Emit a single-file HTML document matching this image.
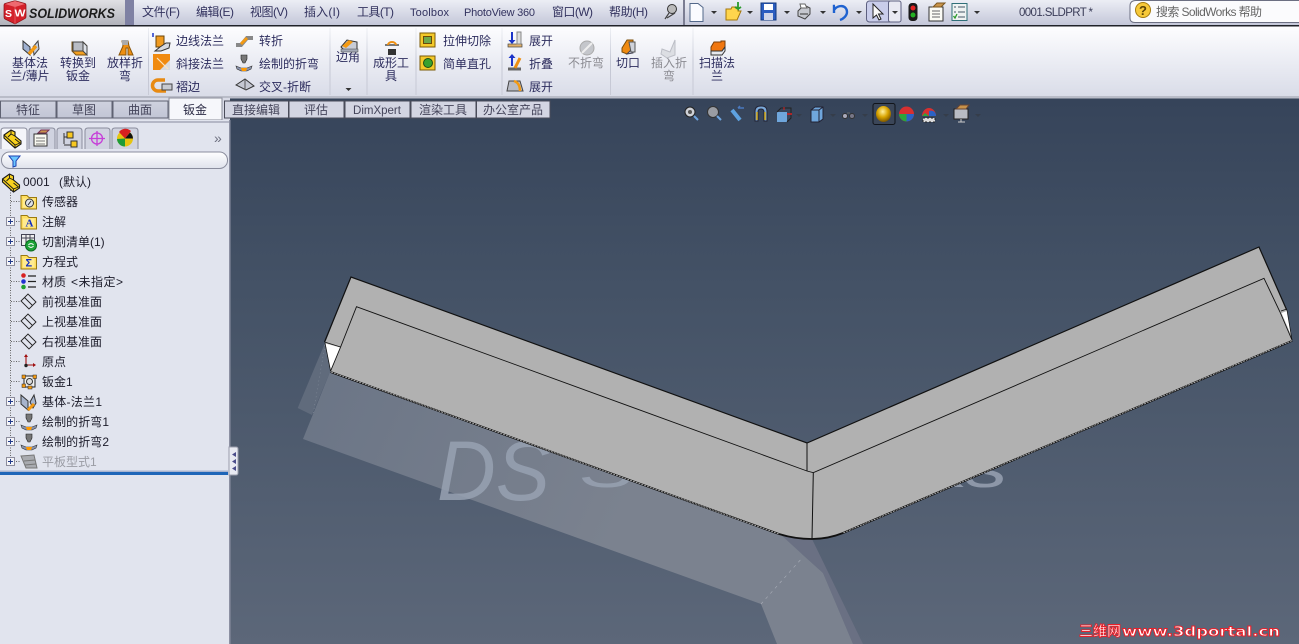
<!DOCTYPE html>
<html lang="zh"><head><meta charset="utf-8"><title>SolidWorks</title>
<style>
html,body{margin:0;padding:0;width:1299px;height:644px;overflow:hidden;background:#4a5669}
svg{display:block;position:absolute;left:0;top:0}
text{font-family:"Liberation Sans","Noto Sans CJK SC",sans-serif;font-size:12px}
.m{fill:#33335f}.r{fill:#2d2d5e}.g{fill:#8b8b92}.t{fill:#1c1c2a}.c{text-anchor:middle}
.tb{fill:#44445a;text-anchor:middle}
</style></head><body>
<svg width="1299" height="644" viewBox="0 0 1299 644" xmlns="http://www.w3.org/2000/svg">
<defs>
<linearGradient id="vp" x1="0" y1="0" x2="0" y2="1"><stop offset="0" stop-color="#36445a"/><stop offset=".35" stop-color="#445266"/><stop offset="1" stop-color="#5c6779"/></linearGradient>
<linearGradient id="bar" x1="0" y1="0" x2="0" y2="1"><stop offset="0" stop-color="#eceef5"/><stop offset="1" stop-color="#c4c7d9"/></linearGradient>
<linearGradient id="logo" x1="0" y1="0" x2="0" y2="1"><stop offset="0" stop-color="#e0e0e4"/><stop offset="1" stop-color="#b2b3bb"/></linearGradient>
<linearGradient id="rib" x1="0" y1="0" x2="0" y2="1"><stop offset="0" stop-color="#fdfdff"/><stop offset="1" stop-color="#d9dce8"/></linearGradient>
<linearGradient id="tab" x1="0" y1="0" x2="0" y2="1"><stop offset="0" stop-color="#cfd2df"/><stop offset="1" stop-color="#c2c5d5"/></linearGradient>
<linearGradient id="sep" x1="0" y1="0" x2="0" y2="1"><stop offset="0" stop-color="#eef0f5"/><stop offset=".5" stop-color="#c4c7d4"/><stop offset="1" stop-color="#c8cad6"/></linearGradient>
<linearGradient id="flt" x1="0" y1="0" x2="0" y2="1"><stop offset="0" stop-color="#fff"/><stop offset="1" stop-color="#dfe2ec"/></linearGradient>
<linearGradient id="sh" gradientUnits="userSpaceOnUse" x1="310" y1="380" x2="620" y2="520"><stop offset="0" stop-color="#6b7586"/><stop offset="1" stop-color="#7b828f"/></linearGradient>
<radialGradient id="gold" cx=".45" cy=".35" r=".7"><stop offset="0" stop-color="#fff1a0"/><stop offset=".5" stop-color="#d9a400"/><stop offset="1" stop-color="#6e4a00"/></radialGradient>
<g id="fd"><path d="M0,2h6l2,2h7.500v11.500h-15.500z" fill="#ffdf60" stroke="#9b7a10"/><rect x="2" y="5" width="11.500" height="9" fill="#ffeb90"/></g>
<g id="pl" fill="none" stroke="#222" stroke-width=".9"><path d="M0,7.500L7,0.500L15,8.500L8,15.500Z"/><path d="M3.500,4L11.500,12"/></g>
<g id="pb" ><rect x="0.500" y="0.500" width="8" height="8" fill="#f3f4f8" stroke="#8c8c9c"/><path d="M2,4.500h5M4.500,2v5" stroke="#223a8a"/></g>
<g id="part"><path d="M0,5L7,0L11,2V6L17,11V14L11,18L0,8Z" fill="#f8d21f" stroke="#1a1a1a" stroke-width="1.100"/><path d="M0,5L11,15V18M7,0L7,4L11,6M7,4L4,7M11,9L16,13L11,15" fill="none" stroke="#1a1a1a" stroke-width=".9"/></g>
<g id="bnd"><path d="M5,0h6v4l-2,4h-2l-2,-4z" fill="#777" stroke="#222" stroke-width=".6"/><path d="M0,11l5,2h6l5,-2l-1,3l-4,2h-6l-4,-2z" fill="#8a93ad" stroke="#333" stroke-width=".6"/><path d="M5,13h6l-1,3h-4z" fill="#f90"/></g>
<path id="dn" d="M0,0h6l-3,3z" fill="#333"/>
</defs>

<!-- viewport -->
<rect x="230" y="98" width="1069" height="546" fill="url(#vp)"/>

<!-- shadow -->
<path d="M325,343L297.700,408L312,415L330,372Z" fill="#606b7c"/>
<path d="M812,539L863,644H853L823,573L803,555L780,536Z" fill="#6a7083"/>
<path d="M330,372L303,439L761,604L777,644H853L823,573L803,555L780,534Z" fill="url(#sh)"/>
<path d="M761,604L803,557" stroke="#a9aeb8" stroke-width=".6" stroke-dasharray="3 4" fill="none"/>
<path d="M325,345L313,415" stroke="#8a93a1" stroke-width=".5" stroke-dasharray="1 3" fill="none"/>

<!-- watermark -->
<text x="437" y="500" style="font-size:84px;font-style:italic;font-family:'Liberation Sans',sans-serif" fill="#98a2b2" opacity=".85" textLength="113" lengthAdjust="spacingAndGlyphs">DS</text>
<text x="578" y="487" style="font-size:56px;font-family:'Liberation Sans',sans-serif" fill="#98a2b2" opacity=".85" textLength="428" lengthAdjust="spacingAndGlyphs">SolidWorks</text>

<!-- part -->
<path d="M351,277L807,443L1259,247L1287,310L1292,340.700L843,533Q828,539 812,539Q795,539 779,534L330.600,372L325,343Z" fill="#b1b1b1"/>
<path d="M325.500,343.500L340.500,347.500L330.600,370Z" fill="#fff"/>
<path d="M1281.500,313L1286.700,311L1291,335Z" fill="#fff"/>
<g fill="none" stroke="#111">
<path d="M324.500,342L351,277L807,443L1259,247L1286.700,310" stroke-width="1.200"/>
<path d="M324.500,342L340.500,347" stroke-width=".8"/>
<path d="M1281,311L1287,309" stroke-width=".8"/>
<path d="M330.600,371L340.600,347L356.500,306.700L807,471L813.300,472.700L1264,278.300L1280,312L1292,340" stroke-width=".9"/>
<path d="M325,343L330.600,371" stroke-width=".7"/>
<path d="M1287,310L1292,340" stroke-width=".7"/>
<path d="M807,443V471M813.300,472.700L812,539" stroke-width="1"/>
<path d="M330.600,372L779,534Q795,539 812,539Q828,539 843,533L1292.300,340.700" stroke-width="1.800"/>
</g>
<path d="M331,372L779,534M1292,340.700L843,533" fill="none" stroke="#e4e4e4" stroke-width=".6" stroke-dasharray="2 1"/>

<!-- top bar -->
<rect x="0" y="0" width="1299" height="25" fill="url(#bar)"/>
<rect x="0" y="0" width="125" height="25" fill="url(#logo)"/>
<rect x="125" y="0" width="9" height="25" fill="#7f81a3"/>
<rect x="0" y="25" width="1299" height="1.500" fill="#1f2128"/>
<rect x="683" y="0" width="2" height="25" fill="#7b7d92"/>
<!-- logo -->
<path d="M4,5Q4,4 5,3.500L14,1Q15,.8 16,1L25,3.500Q26,4 26,5V17Q26,18 25,18.500L15,24L5,19Q4,18.500 4,17Z" fill="#d3212a" stroke="#8c1116" stroke-width=".7"/>
<path d="M5,4L15,1L25,4L15,7Z" fill="#ee6a70"/>
<path d="M15,7V24" stroke="#ef7a80" stroke-width=".6"/>
<text x="5" y="17" style="font-size:10.500px;font-weight:bold" fill="#fff">S</text>
<text x="14.500" y="16.500" style="font-size:10.500px;font-weight:bold" fill="#fff" textLength="11" lengthAdjust="spacingAndGlyphs">W</text>
<text x="29" y="18" style="font-size:13.500px;font-style:italic;font-weight:bold" fill="#1c1c1c" textLength="86" lengthAdjust="spacingAndGlyphs">SOLIDWORKS</text>
<g class="m">
<text x="142" y="16" class="m" textLength="38">文件(F)</text><text x="196" y="16" class="m" textLength="38">编辑(E)</text><text x="250" y="16" class="m" textLength="38">视图(V)</text><text x="304" y="16" class="m" textLength="36">插入(I)</text><text x="357" y="16" class="m" textLength="37">工具(T)</text>
<text x="410" y="16" class="m" style="font-size:11px" textLength="39">Toolbox</text><text x="464" y="16" class="m" style="font-size:11px" textLength="71">PhotoView 360</text>
<text x="552" y="16" class="m" textLength="41">窗口(W)</text><text x="609" y="16" class="m" textLength="39">帮助(H)</text></g>
<!-- pin -->
<circle cx="672" cy="9" r="4.500" fill="#bbb" stroke="#333"/><path d="M669,13L665,19M675,13L667,18" stroke="#444" stroke-width="1.200"/>
<!-- file -->
<path d="M690,3.500h8l5,4v14h-13z" fill="#fafbff" stroke="#53688a"/>
<use href="#dn" x="711" y="11"/>
<path d="M726,9h5l1,-2h6v4h3l-4,9h-11z" fill="#ffd54d" stroke="#a6780c"/><path d="M738,2v7l-3,-2M738,9l3,-2" stroke="#2a9a2a" stroke-width="1.800" fill="none"/>
<use href="#dn" x="747" y="11"/>
<rect x="761" y="3" width="15" height="17" fill="#2c5ec0" stroke="#133a80"/><rect x="764" y="4" width="9" height="6" fill="#fff"/><rect x="764" y="13" width="9" height="7" fill="#d0d6e8"/>
<use href="#dn" x="784" y="11"/>
<path d="M798,11l6,-6l6,3v6l-5,5l-7,-3z" fill="#c5c7ce" stroke="#444"/><path d="M800,4h5l2,4h-6z" fill="#fff" stroke="#666"/><path d="M800,14h8" stroke="#333"/>
<use href="#dn" x="820" y="11"/>
<path d="M835,6h-1v7M834,10c4,-6 13,-5 13,2c0,4 -4,7 -7,8" stroke="#1f62d0" stroke-width="2.400" fill="none"/>
<use href="#dn" x="856" y="11"/>
<rect x="866.500" y="1" width="34.500" height="21" rx="3" fill="#c9cdea" stroke="#5d6080"/><rect x="888.500" y="1" width="12.500" height="21" rx="2" fill="#e8e9f2" stroke="#5d6080"/>
<path d="M873,4V18L876.500,15L879,20L881,19L878.500,14H883Z" fill="#fafafa" stroke="#222"/>
<use href="#dn" x="892" y="11"/>
<rect x="908.500" y="3" width="9" height="18" rx="3.500" fill="#1a1a1a"/><circle cx="913" cy="8" r="2.500" fill="#e42323"/><circle cx="913" cy="15" r="2.500" fill="#23b023"/>
<path d="M929,7h14v14h-14z" fill="#fbfbf5" stroke="#333"/><path d="M932,11h8M932,14h8M932,17h8" stroke="#666"/><path d="M933,7l4,-4h8l-4,4z" fill="#c9944a" stroke="#7a5520"/>
<rect x="952" y="3.500" width="15" height="17" fill="#eef2f2" stroke="#2f6f78"/><path d="M958,7h7M958,12h7M958,17h7" stroke="#456"/><path d="M954,7h2M954,12h2" stroke="#456"/><path d="M953.500,16l1.500,2l2,-4" stroke="#2a9a2a" fill="none" stroke-width="1.300"/>
<use href="#dn" x="974" y="11"/>
<text x="1019" y="16" class="m" style="fill:#3a3c58;font-size:11.500px" textLength="74">0001.SLDPRT *</text>
<!-- search -->
<path d="M1299,.5H1136Q1130,.5 1130,6V18Q1130,22.500 1135,22.500H1299" fill="#fbfbfd" stroke="#6c6f82"/>
<circle cx="1143" cy="10" r="7.500" fill="#f7c93a" stroke="#a67c10"/><text x="1139" y="15" style="font-size:13px;font-weight:bold" fill="#5c4406">?</text>
<text x="1156" y="16" fill="#666" textLength="106">搜索 SolidWorks 帮助</text>

<!-- ribbon -->
<rect x="0" y="26.500" width="1299" height="70" fill="url(#rib)"/>
<rect x="0" y="96" width="1299" height="2.500" fill="#b9bcc8"/>
<g fill="url(#sep)">
<rect x="148" y="28" width="1" height="67"/><rect x="329.500" y="28" width="1" height="67"/><rect x="366.500" y="28" width="1" height="67"/><rect x="415.500" y="28" width="1" height="67"/><rect x="501.500" y="28" width="1" height="67"/><rect x="610" y="28" width="1" height="67"/><rect x="692.500" y="28" width="1" height="67"/>
</g>
<!-- ribbon labels -->
<g class="r">
<text x="30" y="67" class="r c">基体法</text><text x="30" y="80" class="r c">兰/薄片</text>
<text x="78" y="67" class="r c">转换到</text><text x="78" y="80" class="r c">钣金</text>
<text x="125" y="67" class="r c">放样折</text><text x="125" y="80" class="r c">弯</text>
<text x="176" y="45" class="r">边线法兰</text><text x="176" y="68" class="r">斜接法兰</text><text x="176" y="91" class="r">褶边</text>
<text x="259" y="45" class="r">转折</text><text x="259" y="68" class="r">绘制的折弯</text><text x="259" y="91" class="r">交叉-折断</text>
<text x="348" y="61" class="r c">边角</text>
<text x="391" y="67" class="r c">成形工</text><text x="391" y="80" class="r c">具</text>
<text x="443" y="45" class="r">拉伸切除</text><text x="443" y="68" class="r">简单直孔</text>
<text x="529" y="45" class="r">展开</text><text x="529" y="68" class="r">折叠</text><text x="529" y="91" class="r">展开</text>
<text x="586" y="67" class="g c">不折弯</text>
<text x="628" y="67" class="r c">切口</text>
<text x="669" y="67" class="g c">插入折</text><text x="669" y="80" class="g c">弯</text>
<text x="717" y="67" class="r c">扫描法</text><text x="717" y="80" class="r c">兰</text>
</g>
<!-- ribbon icons -->
<path d="M23,41L30,47V55L23,49Z" fill="#9fb0d0" stroke="#333"/><path d="M33,47L38,41L39,49L34,55Z" fill="#c3cde0" stroke="#444"/><path d="M29,54L36,46" stroke="#f49a12" stroke-width="3.500"/>
<path d="M72,42h11l4,4v9H76l-4,-4z" fill="#f4a020" stroke="#7c5210"/><rect x="73" y="42" width="10" height="9" fill="#b9bcc4" stroke="#444"/><path d="M83,42l4,4v9l-4,-4z" fill="#dfe2e8" stroke="#444"/>
<path d="M122,41h6l1,5l4,9h-5v-7h-2v7h-7l4,-9z" fill="#ee8f12" stroke="#8a560a"/><rect x="122" y="40" width="6" height="5" fill="#aaa"/>
<!-- edge flange -->
<path d="M156,36h8v11h-8z" fill="#f09a20" stroke="#6a4408"/><path d="M160,47l6,-4h4l-1,5l-8,3h-6z" fill="#d6d9e0" stroke="#333"/><path d="M153,33v4" stroke="#1c34c8" stroke-width="1.500"/>
<rect x="153" y="54" width="17" height="16" fill="#f08a10"/><path d="M170,60V70H160Z" fill="#d8dae0"/><path d="M157,58L168,69" stroke="#fbe3c0" stroke-width="1.200"/>
<path d="M165,80h-7a5,5 0 0 0 0,11h8" fill="none" stroke="#e88a12" stroke-width="3.500"/><rect x="162" y="84" width="10" height="6" fill="#c7cad2" stroke="#444"/>
<path d="M236,45h5l6,-7h6" stroke="#888" stroke-width="4" fill="none"/><path d="M241,44l6,-6" stroke="#f49a12" stroke-width="3"/>
<use href="#bnd" x="236" y="55"/>
<path d="M236,85l9,-6l9,7l-8,4z" fill="#c5c8d2" stroke="#333"/><path d="M245,79v11" stroke="#555"/>
<!-- corner -->
<path d="M341,47l6,-7l10,2v8h-13z" fill="#c8ccd6" stroke="#333"/><path d="M342,46l7,-6l4,2l-7,6z" fill="#f49a12"/><rect x="341" y="49" width="17" height="3" fill="#a3a9b6" stroke="#444" stroke-width=".5"/>
<use href="#dn" x="345.500" y="88"/>
<!-- forming -->
<path d="M385,45h14" stroke="#777" stroke-width="2"/><path d="M388,45a4,3 0 0 1 8,0" fill="none" stroke="#ee8f12" stroke-width="2"/><rect x="388" y="49" width="8" height="6" fill="#333"/>
<rect x="420" y="33" width="15" height="14" fill="#f4c92a" stroke="#7a5a08"/><rect x="423.500" y="36.500" width="8" height="7" fill="#6da84a" stroke="#6b4a08"/>
<rect x="420" y="56" width="15" height="14" fill="#f4c92a" stroke="#7a5a08"/><circle cx="428" cy="63" r="4.500" fill="#39a12f" stroke="#1e4e14"/>
<!-- unfold -->
<path d="M512,32v11" stroke="#1c34c8" stroke-width="2"/><path d="M508.500,40l3.500,4l3.500,-4z" fill="#1c34c8"/><rect x="508" y="44" width="14" height="3" fill="#e2b068" stroke="#444" stroke-width=".7"/><rect x="517" y="32" width="4" height="12" fill="#ddd" stroke="#888"/>
<path d="M512,55v11" stroke="#1c34c8" stroke-width="2"/><path d="M508.500,58l3.500,-4l3.500,4z" fill="#1c34c8"/><path d="M508,69h13" stroke="#666" stroke-width="3"/><path d="M515,68l5,-10" stroke="#ee8f12" stroke-width="3"/>
<path d="M507,91l2,-10h11l3,10z" fill="#b9bcc5" stroke="#444"/><path d="M514,81q6,2 6,10" stroke="#f49a12" stroke-width="2.500" fill="none"/>
<circle cx="587" cy="48" r="7" fill="#c4c6cb" stroke="#aaa"/><path d="M582,53l10,-10" stroke="#eee" stroke-width="2"/>
<path d="M622,48l5,-8h6v11l-6,3l-5,-2z" fill="#f08a10" stroke="#7a4c08"/><path d="M627,54l6,-6v5z" fill="#ccd" stroke="#445"/><path d="M629,42h6v10h-4z" fill="#cfd2da" stroke="#555"/>
<path d="M662,49l8,3l5,-12v15l-8,3l-6,-4z" fill="#dcdee3" stroke="#bcbec6"/>
<path d="M711,47l3,-5h7v-1h4v6l-3,4h-11z" fill="#f0760f" stroke="#7a3e08"/><path d="M711,51h11l3,-4v4l-3,4h-11z" fill="#e6e8ee" stroke="#333"/>

<!-- tabs -->
<rect x="0" y="98" width="230" height="24" fill="#d8dae6"/>
<g stroke="#5f6272" fill="url(#tab)">
<rect x=".5" y="101" width="55.500" height="17"/><rect x="57" y="101" width="55" height="17"/><rect x="113" y="101" width="55" height="17"/>
</g>
<g stroke="#4a4c5a" fill="#d3d5e2">
<rect x="224.500" y="101" width="64" height="17"/><rect x="289" y="101" width="55" height="17"/><rect x="345" y="101" width="65" height="17"/><rect x="411" y="101" width="65" height="17"/><rect x="476.500" y="101" width="73.500" height="17"/>
</g>
<path d="M169,120V98H222V120Z" fill="#f6f7fb" stroke="#8a8c9a"/>
<g>
<text x="28" y="114" class="tb">特征</text><text x="84" y="114" class="tb">草图</text><text x="140" y="114" class="tb">曲面</text>
<text x="195" y="114" class="c" fill="#2a2a44">钣金</text>
<text x="256" y="114" class="tb">直接编辑</text><text x="316" y="114" class="tb">评估</text><text x="377" y="114" class="tb" style="font-size:11.500px">DimXpert</text><text x="443" y="114" class="tb">渲染工具</text><text x="513" y="114" class="tb">办公室产品</text>
</g>

<!-- left panel -->
<rect x="0" y="120" width="229" height="524" fill="#e1e4ee"/>
<rect x="229" y="120" width="1.500" height="524" fill="#8c90a2"/>
<rect x="0" y="121" width="229" height="2" fill="#b4b7c6"/>
<rect x="0" y="472" width="228" height="3" fill="#1f66b8"/>
<rect x="0" y="470.500" width="228" height="1.500" fill="#a8b4d0"/>
<!-- panel tabs -->
<g fill="#d0d3e0" stroke="#8a8d9d">
<path d="M29,149V131q0,-3 3,-3h20q3,0 3,3V149"/><path d="M57,149V131q0,-3 3,-3h19q3,0 3,3V149"/><path d="M85,149V131q0,-3 3,-3h19q3,0 3,3V149"/><path d="M112,149V131q0,-3 3,-3h20q3,0 3,3V149"/>
</g>
<path d="M1,149V131q0,-3 3,-3h20q3,0 3,3V150" fill="#f4f5fa" stroke="#8a8d9d"/>
<use href="#part" x="4" y="130"/>
<rect x="34" y="134" width="13" height="12" fill="#f8f8f0" stroke="#333"/><path d="M36,138h9M36,141h9M36,144h9" stroke="#777"/><path d="M38,133l3,-3h8l-3,3z" fill="#c8924a" stroke="#735"/>
<path d="M64,133v11M64,137h4M64,145h7" stroke="#333" fill="none"/><rect x="67" y="132" width="6" height="6" fill="#f8c820" stroke="#333"/><rect x="71" y="141" width="6" height="6" fill="#f8c820" stroke="#333"/>
<g stroke="#c63fd8" fill="none" stroke-width="1.300"><circle cx="97" cy="138.500" r="5.500"/><path d="M89,138.500h16M97,131v15"/></g>
<circle cx="125" cy="138.500" r="8" fill="#e6c410"/><path d="M125,138.500L119,132A8,8 0 0 1 131,131z" fill="#d62020"/><path d="M125,138.500L117,139A8,8 0 0 0 125,146.500z" fill="#1e9b36"/><path d="M125,138.500h8a8,8 0 0 0 -3,-6z" fill="#111"/>
<text x="214" y="143" style="font-size:14px" fill="#6e7080">»</text>
<!-- filter -->
<rect x="1.500" y="152" width="226" height="16.500" rx="8" fill="url(#flt)" stroke="#8a8d9d"/>
<path d="M9,156h11l-4,5v5l-3,1v-6z" fill="#6bc6ff" stroke="#1c40b0"/>
<!-- tree -->
<path d="M10.500,190V462M11,201.500h9M11,221.500h9M11,241.500h9M11,261.500h9M11,281.500h9M11,301.500h9M11,321.500h9M11,341.500h9M11,361.500h9M11,381.500h9M11,401.500h9M11,421.500h9M11,441.500h9M11,461.500h9" stroke="#666" stroke-dasharray="1 1.500" fill="none"/>
<use href="#pb" x="6" y="217"/><use href="#pb" x="6" y="237"/><use href="#pb" x="6" y="257"/><use href="#pb" x="6" y="397"/><use href="#pb" x="6" y="417"/><use href="#pb" x="6" y="437"/><use href="#pb" x="6" y="457"/>
<use href="#part" x="2.500" y="174"/>
<use href="#fd" x="21" y="193.500"/><circle cx="29.500" cy="203" r="4" fill="#dfe4ea" stroke="#333"/><path d="M28,205l3,-4" stroke="#333"/>
<use href="#fd" x="21" y="213.500"/><text x="25.500" y="226.500" style="font-size:11px;font-weight:bold;font-family:'Liberation Serif',serif" fill="#1530c0">A</text>
<rect x="21.500" y="234.500" width="13" height="11" fill="#eee" stroke="#445"/><path d="M21.500,238h13M26,235v11M30,235v11" stroke="#445"/><circle cx="31" cy="245.500" r="5.500" fill="#1ca338" stroke="#0d6c22"/><path d="M28.500,245a3,3 0 0 1 5,0M33.500,246a3,3 0 0 1 -5,0" stroke="#fff" fill="none"/>
<use href="#fd" x="21" y="253.500"/><text x="25.500" y="266.500" style="font-size:11px;font-weight:bold" fill="#1530c0">Σ</text>
<circle cx="23.500" cy="275.500" r="2.300" fill="#d72020"/><circle cx="23.500" cy="281.500" r="2.300" fill="#2030d0"/><circle cx="23.500" cy="287" r="2.300" fill="#20a030"/><path d="M28,276h8M28,281.500h8M28,287h8" stroke="#222" stroke-width="1.300"/>
<use href="#pl" x="21" y="293.500"/><use href="#pl" x="21" y="313.500"/><use href="#pl" x="21" y="333.500"/>
<path d="M26,366V355M26,365H34" stroke="#a01010" stroke-width="1.100"/><path d="M24,357l2,-3l2,3zM33,363l3,2l-3,2z" fill="#a01010"/><circle cx="26" cy="365.500" r="1.700" fill="#222"/>
<rect x="24" y="376" width="11" height="11" fill="#eee" stroke="#222"/><circle cx="29.500" cy="381.500" r="3" fill="#ddd" stroke="#333"/><rect x="22" y="375" width="3.500" height="3.500" fill="#f49a12" stroke="#222" stroke-width=".5"/><rect x="33" y="375" width="3.500" height="3.500" fill="#f49a12" stroke="#222" stroke-width=".5"/><rect x="22" y="384" width="3.500" height="3.500" fill="#f49a12" stroke="#222" stroke-width=".5"/><rect x="28" y="386" width="4" height="3" fill="#f49a12" stroke="#222" stroke-width=".5"/>
<path d="M21,395l7,6v9l-7,-6zM30,402l4,-7l2,8l-3,5z" fill="#a7b4cc" stroke="#333"/><path d="M28,410l6,-6" stroke="#f49a12" stroke-width="3"/>
<use href="#bnd" x="21" y="414"/><use href="#bnd" x="21" y="434"/>
<path d="M21,456l13,-1l3,13h-11z" fill="#a9abb0" stroke="#777"/><path d="M24,461l11,-1M25,465l11,-1" stroke="#777"/>
<g class="t">
<text x="23" y="186" class="t">0001</text><text x="59" y="186" class="t">(默认)</text>
<text x="42" y="206" class="t">传感器</text><text x="42" y="226" class="t">注解</text><text x="42" y="246" class="t">切割清单(1)</text><text x="42" y="266" class="t">方程式</text><text x="42" y="286" class="t">材质</text><text x="71" y="286" class="t" textLength="52">&lt;未指定&gt;</text><text x="42" y="306" class="t">前视基准面</text><text x="42" y="326" class="t">上视基准面</text><text x="42" y="346" class="t">右视基准面</text><text x="42" y="366" class="t">原点</text><text x="42" y="386" class="t">钣金1</text><text x="42" y="406" class="t" textLength="60">基体-法兰1</text><text x="42" y="426" class="t" textLength="67">绘制的折弯1</text><text x="42" y="446" class="t" textLength="67">绘制的折弯2</text>
</g>
<text x="42" y="466" fill="#9a9ca4">平板型式1</text>
<!-- grip -->
<path d="M229,447h7q2,0 2,2v24q0,2 -2,2h-7z" fill="#e8eaf2" stroke="#9a9dac"/>
<path d="M236,452l-4,2.500l4,2.500zM236,459l-4,2.500l4,2.500zM236,466l-4,2.500l4,2.500z" fill="#4a4c8a"/>

<!-- heads up -->
<circle cx="690" cy="112" r="5" fill="#cfd2d8" stroke="#222"/><circle cx="690" cy="112" r="2" fill="#555"/><path d="M694,116l4,4" stroke="#6ea4e0" stroke-width="2"/>
<circle cx="713" cy="112" r="5.500" fill="#9a9da4" stroke="#333"/><path d="M717,116l4,4" stroke="#6ea4e0" stroke-width="2"/>
<path d="M732,110l8,10" stroke="#5ea2e0" stroke-width="4"/><path d="M738,108h6M738,108l2,-2" stroke="#4a7ac0" fill="none" stroke-width="1.500"/>
<path d="M755,121V111q0,-5 6,-5t6,5V121h-3V112q0,-3 -3,-3t-3,3V121z" fill="#7aa8d8" stroke="#223"/><path d="M757,112v8M765,112v8" stroke="#d8b020" stroke-width="1.500"/>
<rect x="777" y="112" width="10" height="10" fill="#6fa6dc"/><path d="M777,112l4,-4h10v10l-4,4" fill="none" stroke="#222"/><path d="M787,114h5" stroke="#d82020" stroke-width="1.500"/><path d="M784,107v3" stroke="#d82020"/>
<use href="#dn" x="796" y="114" opacity=".4"/>
<path d="M811,110l4,-3h8v12l-4,3h-8z" fill="#6fa6dc" stroke="#223"/><path d="M811,110h8v12M819,110l4,-3" fill="none" stroke="#223"/>
<use href="#dn" x="830" y="114" opacity=".4"/>
<circle cx="845" cy="116" r="2.500" fill="#aab" stroke="#333"/><circle cx="852" cy="116" r="2.500" fill="#778" stroke="#333"/><path d="M847,113l3,0" stroke="#666"/>
<use href="#dn" x="862" y="114" opacity=".4"/>
<rect x="873" y="103.500" width="22" height="21" rx="2" fill="#3b4658" stroke="#11141a"/>
<ellipse cx="883.500" cy="114" rx="7.500" ry="8" fill="url(#gold)"/>
<circle cx="906.500" cy="114" r="7.500" fill="#d73030"/><path d="M906.500,114L899,114A7.500,7.500 0 0 0 906.500,121.500z" fill="#2ca53a"/><path d="M906.500,114L906.500,121.500A7.500,7.500 0 0 0 914,114z" fill="#2b62c4"/>
<path d="M922,116a7,8 0 1 1 14,0z" fill="#d73030"/><path d="M929,116v-5a5,5 0 0 1 7,5z" fill="#2b62c4"/><path d="M922,116l3,-3l4,3z" fill="#2ca53a"/><path d="M923,118h12v4h-12z" fill="#ddd" stroke="#222" stroke-dasharray="2 2"/>
<use href="#dn" x="943" y="114" opacity=".4"/>
<rect x="954" y="109" width="14" height="10" fill="#b8bcc4" stroke="#222"/><path d="M958,122h7M961,119v3" stroke="#ccc"/><path d="M956,109l4,-4h9l-3,4z" fill="#c8924a" stroke="#643"/>
<use href="#dn" x="975" y="114" opacity=".4"/>

<!-- site watermark -->
<text x="1079" y="636" fill="#fff" stroke="#e8202a" stroke-width=".9" style="font-size:14px;font-weight:bold">三维网</text>
<text x="1122" y="636" fill="#fff" stroke="#e8202a" stroke-width=".9" style="font-size:13px;font-weight:bold;font-family:'DejaVu Sans',sans-serif" textLength="158" lengthAdjust="spacingAndGlyphs">www.3dportal.cn</text>
</svg>
</body></html>
